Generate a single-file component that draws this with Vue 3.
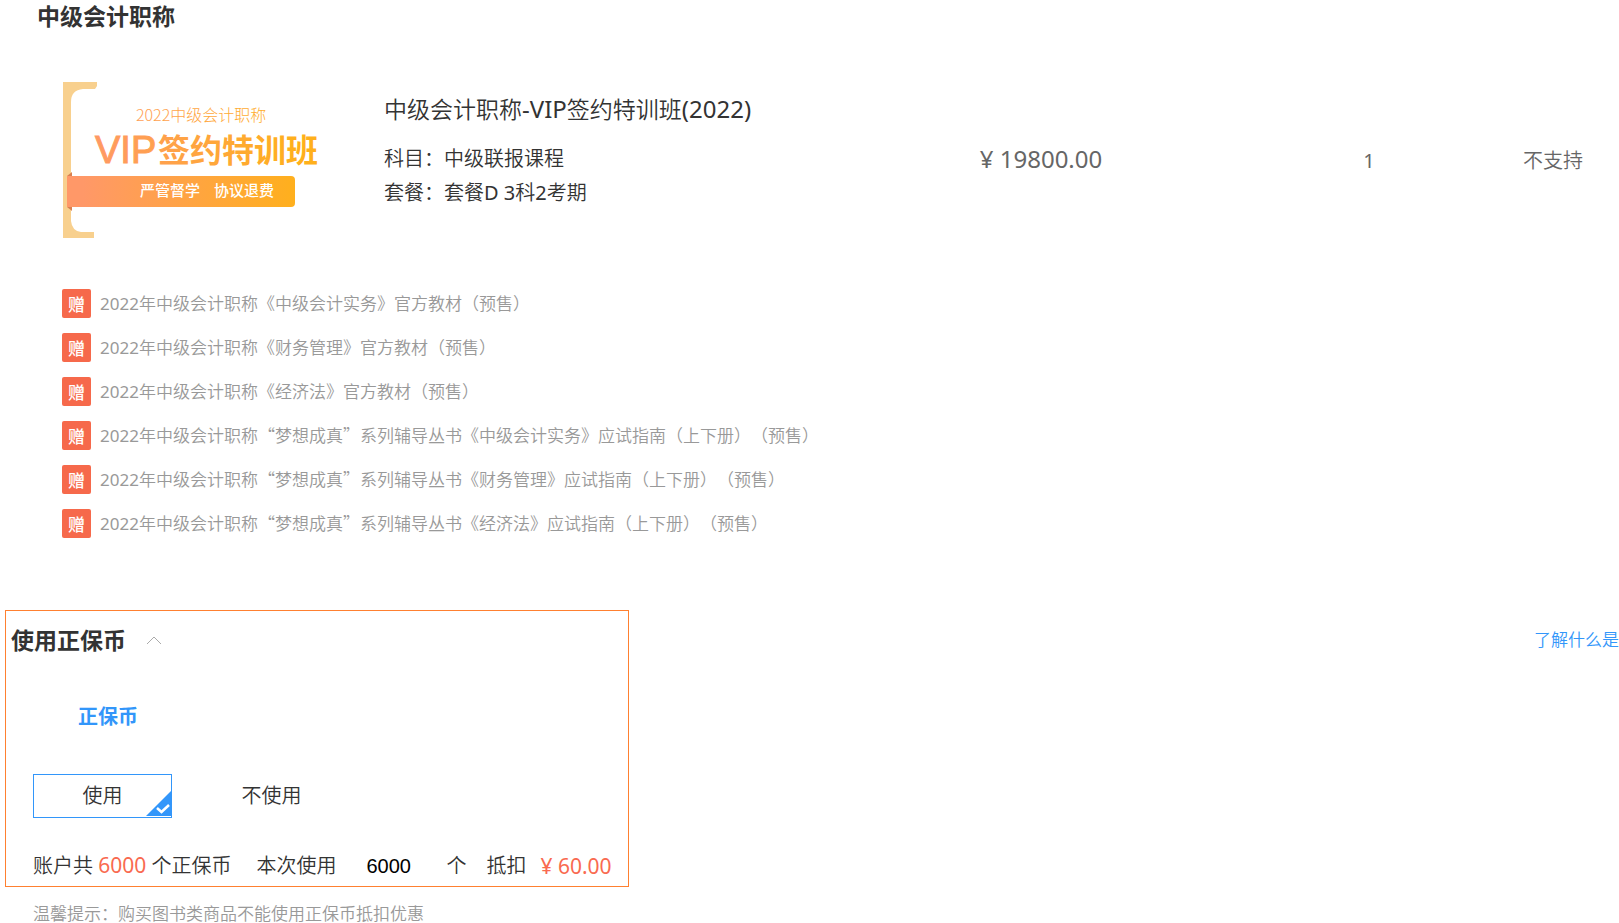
<template>
  <main class="pedido">
    <h2 class="categoria">中级会计职称</h2>

    <section class="producto">
      <svg class="portada" viewBox="0 0 256 158" role="img" aria-label="VIP签约特训班">
        <defs>
          <linearGradient id="naranja" gradientUnits="userSpaceOnUse" x1="20" y1="0" x2="235" y2="0">
            <stop offset="0" stop-color="#ff9868" />
            <stop offset="1" stop-color="#ffb01c" />
          </linearGradient>
        </defs>
        <path d="M0 0H34V4L32 7H20Q8 8 8 20V139Q9 149 18 150H31V156H0Z" fill="#f8d08e" />
        <path d="M4 94L9 90V94ZM4 125L9 129V125Z" fill="#d9804f" />
        <path d="M4 94H228Q232 94 232 98V121Q232 125 228 125H4Z" fill="url(#naranja)" />
        <text class="portada-fina" x="73" y="39" fill="url(#naranja)">2022中级会计职称</text>
        <text class="portada-vip" x="32" y="81" fill="url(#naranja)" stroke="url(#naranja)">VIP</text>
        <text class="portada-titulo" x="95" y="80" fill="url(#naranja)">签约特训班</text>
        <text class="portada-lema" x="77" y="114">严管督学</text>
        <text class="portada-lema" x="151" y="114">协议退费</text>
      </svg>
      <div class="info">
        <h3>中级会计职称<span class="latino">-VIP</span>签约特训班<span class="latino">(2022)</span></h3>
        <p>科目：中级联报课程</p>
        <p>套餐：套餐<span class="latino">D 3</span>科<span class="latino">2</span>考期</p>
      </div>
      <div class="precio">¥ 19800.00</div>
      <div class="celda"><span class="latino">1</span></div>
      <div class="celda">不支持</div>
    </section>

    <ul class="regalos">
      <li v-for="r in regalos" :key="r">
        <span class="insignia">赠</span>
        <span class="regalo"><span class="latino">2022</span>{{ r }}</span>
      </li>
    </ul>

    <section class="monedas">
      <div class="caja">
        <button type="button" class="cabecera" :aria-expanded="abierto" @click="abierto = !abierto">
          使用正保币
          <svg class="flecha" :class="{ cerrada: !abierto }" viewBox="0 0 16 9">
            <path d="M1 8L8 1L15 8" fill="none" stroke="#aaa" />
          </svg>
        </button>
        <div v-show="abierto" class="panel">
          <h4>正保币</h4>
          <div class="opciones">
            <label class="opcion" :class="{ activa: usar === 'si' }">
              <input v-model="usar" type="radio" name="usar" value="si">
              使用
              <svg v-if="usar === 'si'" class="marca" viewBox="0 0 25 25">
                <path d="M25 0V25H0Z" fill="#3296fa" />
                <path d="M11 17L15.500 21L23 14" fill="none" stroke="#fff" stroke-width="2.500" />
              </svg>
            </label>
            <label class="opcion" :class="{ activa: usar === 'no' }">
              <input v-model="usar" type="radio" name="usar" value="no">
              不使用
            </label>
          </div>
          <div class="importe">
            <span>账户共 <em>6000</em> 个正保币</span>
            <label for="cantidad">本次使用</label>
            <input id="cantidad" v-model="cantidad" type="text">
            <span class="unidad">个</span>
            <span class="descuento">抵扣</span>
            <em>¥ {{ descuento }}</em>
          </div>
        </div>
      </div>
      <a class="ayuda" href="#">了解什么是</a>
    </section>
    <p class="aviso">温馨提示：购买图书类商品不能使用正保币抵扣优惠</p>
  </main>
</template>

<script setup>
import { ref, computed } from 'vue'

const abierto = ref(true)
const usar = ref('si')
const cantidad = ref('6000')

// 100 monedas = 1 yuan
const descuento = computed(() => ((parseInt(cantidad.value) || 0) / 100).toFixed(2))

const regalos = [
  '年中级会计职称《中级会计实务》官方教材（预售）',
  '年中级会计职称《财务管理》官方教材（预售）',
  '年中级会计职称《经济法》官方教材（预售）',
  '年中级会计职称“梦想成真”系列辅导丛书《中级会计实务》应试指南（上下册）（预售）',
  '年中级会计职称“梦想成真”系列辅导丛书《财务管理》应试指南（上下册）（预售）',
  '年中级会计职称“梦想成真”系列辅导丛书《经济法》应试指南（上下册）（预售）'
]
</script>

<style>
body {
  margin: 0;
  background: #fff;
}
</style>

<style scoped>
.pedido {
  overflow: hidden;
  color: #333;
  font-family: "Noto Sans", "Noto Sans CJK SC", sans-serif;
  font-size: 20px;
  font-weight: 350;
  line-height: 34px;
  text-spacing-trim: space-all;
}
h2, h3, h4, p, ul {
  margin: 0;
  padding: 0;
}
em {
  color: #f96a50;
  font-size: 21px;
  font-style: normal;
  font-weight: 400;
  line-height: 30px;
}
/* las cifras van un poco más marcadas que el chino */
.latino {
  font-family: "Noto Sans", sans-serif;
  font-weight: 400;
}
.categoria {
  padding-left: 37px;
  font-size: 23px;
  font-weight: 700;
  line-height: 32px;
}
.producto {
  display: grid;
  grid-template-columns: 321px 447fr 420fr 236fr 132fr;
  align-items: center;
  margin-top: 50px;
  padding-left: 63px;
}
.portada {
  width: 256px;
  height: 158px;
}
.portada text {
  font-family: "Noto Sans CJK SC", sans-serif;
}
.portada .portada-fina {
  font-size: 16px;
  font-weight: 300;
}
.portada .portada-vip {
  font-family: "Liberation Sans", sans-serif;
  font-size: 38px;
  font-weight: 400;
}
.portada .portada-titulo {
  font-size: 32px;
  font-weight: 700;
}
.portada .portada-lema {
  fill: #fff;
  font-size: 15px;
  font-weight: 500;
}
.info {
  align-self: start;
  padding-top: 10px;
}
.info h3 {
  margin-bottom: 16px;
  font-size: 23px;
  font-weight: 350;
}
.info h3 .latino {
  font-size: 24px;
}
.precio, .celda {
  color: #666;
  text-align: center;
}
.precio {
  padding-bottom: 4px;
  font-size: 24px;
  font-weight: 400;
}
.regalos {
  display: grid;
  gap: 15px;
  margin-top: 49px;
  padding-left: 62px;
  list-style: none;
}
.regalos li {
  display: flex;
  align-items: center;
  gap: 9px;
  height: 29px;
}
.insignia {
  width: 29px;
  height: 29px;
  border-radius: 2px;
  background: #f6694b;
  color: #fff;
  font-size: 17px;
  font-weight: 500;
  line-height: 31px;
  text-align: center;
}
.regalo {
  color: #999;
  font-family: "Noto Sans CJK SC", sans-serif;
  font-size: 17px;
}
.monedas {
  display: flex;
  justify-content: space-between;
  align-items: flex-start;
  margin-top: 72px;
  padding-left: 5px;
}
.caja {
  padding: 12px 16px 3px 5px;
  border: 1px solid #ff8030;
}
.cabecera {
  display: flex;
  align-items: center;
  gap: 20px;
  padding: 0;
  border: 0;
  background: none;
  color: #333;
  font: inherit;
  font-size: 23px;
  font-weight: 700;
  cursor: pointer;
}
.flecha {
  width: 16px;
  height: 9px;
}
.flecha.cerrada {
  transform: rotate(180deg);
}
.panel {
  padding-left: 22px;
}
.panel h4 {
  margin-top: 43px;
  padding-left: 45px;
  color: #3296fa;
  font-size: 20px;
}
.opciones {
  display: flex;
  gap: 30px;
  margin-top: 40px;
}
.opcion {
  position: relative;
  width: 137px;
  border: 1px solid transparent;
  line-height: 42px;
  text-align: center;
  cursor: pointer;
}
.opcion.activa {
  border-color: #3296fa;
}
.opcion input {
  position: absolute;
  margin: 0;
  opacity: 0;
}
.marca {
  position: absolute;
  right: 0;
  bottom: 1px;
  width: 25px;
  height: 25px;
}
.importe {
  display: flex;
  align-items: center;
  margin-top: 31px;
}
.importe label {
  margin-left: 25px;
}
.importe input {
  width: 80px;
  margin-left: 30px;
  padding: 0;
  border: 0;
  outline: 0;
  background: none;
  color: #000;
  font-family: "Liberation Sans", sans-serif;
  font-size: 20px;
  font-weight: 400;
}
.unidad {
  margin-right: 20px;
}
.descuento {
  margin-right: 14px;
}
.ayuda {
  padding-top: 13px;
  color: #3296fa;
  font-size: 17px;
  text-decoration: none;
  white-space: nowrap;
}
.aviso {
  margin-top: 18px;
  padding-left: 33px;
  color: #999;
  font-size: 17px;
  line-height: 18px;
}
</style>
